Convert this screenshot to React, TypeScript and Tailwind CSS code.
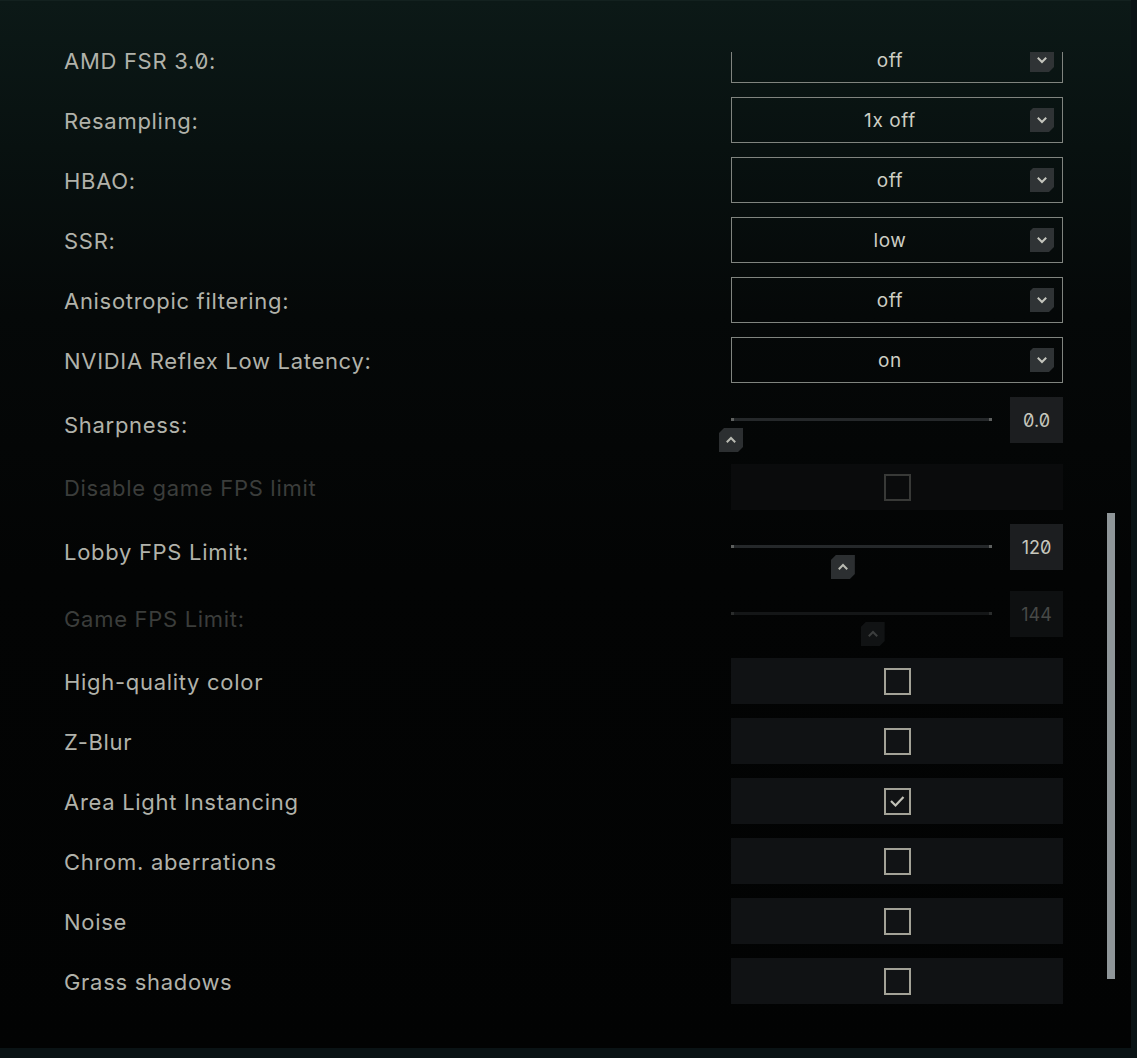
import React from "react";

type Row =
  | { kind: "select"; label: string; value: string }
  | { kind: "slider"; label: string; value: string; pct: number; disabled?: boolean }
  | { kind: "check"; label: string; checked: boolean; disabled?: boolean };

const rows: Row[] = [
  { kind: "select", label: "AMD FSR 3.0:", value: "off" },
  { kind: "select", label: "Resampling:", value: "1x off" },
  { kind: "select", label: "HBAO:", value: "off" },
  { kind: "select", label: "SSR:", value: "low" },
  { kind: "select", label: "Anisotropic filtering:", value: "off" },
  { kind: "select", label: "NVIDIA Reflex Low Latency:", value: "on" },
  { kind: "slider", label: "Sharpness:", value: "0.0", pct: 0 },
  { kind: "check", label: "Disable game FPS limit", checked: false, disabled: true },
  { kind: "slider", label: "Lobby FPS Limit:", value: "120", pct: (120 - 30) / 210 },
  { kind: "slider", label: "Game FPS Limit:", value: "144", pct: (144 - 30) / 210, disabled: true },
  { kind: "check", label: "High-quality color", checked: false },
  { kind: "check", label: "Z-Blur", checked: false },
  { kind: "check", label: "Area Light Instancing", checked: true },
  { kind: "check", label: "Chrom. aberrations", checked: false },
  { kind: "check", label: "Noise", checked: false },
  { kind: "check", label: "Grass shadows", checked: false },
];

const TRACK_W = 261;

function ChevronDown() {
  return (
    <svg width="12" height="12" viewBox="0 0 12 12" fill="none">
      <path d="M2.5 4.5 L6 8 L9.5 4.5" stroke="#c4c5bd" strokeWidth="2" strokeLinecap="square" />
    </svg>
  );
}

function ChevronUp({ dim }: { dim?: boolean }) {
  return (
    <svg width="12" height="12" viewBox="0 0 12 12" fill="none">
      <path
        d="M2.5 7.5 L6 4 L9.5 7.5"
        stroke={dim ? "#3c3e3e" : "#b9bab2"}
        strokeWidth="2"
        strokeLinecap="square"
      />
    </svg>
  );
}

function Select({ value }: { value: string }) {
  return (
    <div className="relative h-[46px] w-[332px] border border-[#80847f] flex items-center pr-[14px]">
      <span className="flex-1 pt-[3px] text-center text-[19px] text-[#cdcec4] tracking-[0.6px]">{value}</span>
      <div className="absolute right-[8px] top-[10px] w-[24px] h-[24px] bg-[#2f3335] flex items-center justify-center [clip-path:polygon(3px_0,100%_0,100%_calc(100%-5px),calc(100%-5px)_100%,0_100%,0_3px)]">
        <ChevronDown />
      </div>
    </div>
  );
}

function Slider({ value, pct, disabled }: { value: string; pct: number; disabled?: boolean }) {
  return (
    <div className="h-[53px] w-[332px] flex items-start gap-[18px]">
      <div className="relative w-[261px] h-[53px]">
        <div
          className={`absolute left-0 right-0 top-[21px] h-[3px] ${disabled ? "bg-[#141617]" : "bg-[#25282a]"}`}
        />
        <div className={`absolute left-0 top-[21px] w-[3px] h-[3px] ${disabled ? "bg-[#2a2c2c]" : "bg-[#5e605f]"}`} />
        <div className={`absolute right-0 top-[21px] w-[3px] h-[3px] ${disabled ? "bg-[#2a2c2c]" : "bg-[#5e605f]"}`} />
        <div
          className={`absolute top-[31px] w-[24px] h-[24px] flex items-center justify-center [clip-path:polygon(5px_0,100%_0,100%_calc(100%-5px),calc(100%-5px)_100%,0_100%,0_5px)] ${
            disabled ? "bg-[#111314]" : "bg-[#2c2f31]"
          }`}
          style={{ left: pct * TRACK_W - 12 }}
        >
          <ChevronUp dim={disabled} />
        </div>
      </div>
      <div
        className={`w-[53px] h-[46px] flex items-center justify-center text-[18px] slashed-zero ${
          disabled ? "bg-[#0e1011] text-[#474947]" : "bg-[#1c1e20] text-[#c6c7bd]"
        }`}
      >
        {value}
      </div>
    </div>
  );
}

function Check({ checked, disabled }: { checked: boolean; disabled?: boolean }) {
  return (
    <div
      className={`h-[46px] w-[332px] flex items-center justify-center ${
        disabled ? "bg-[#0a0b0c]" : "bg-[#101214]"
      }`}
    >
      <div
        className={`w-[27px] h-[27px] border-2 flex items-center justify-center ${
          disabled ? "border-[#383937] bg-[#0a0b0c]" : "border-[#a3a297] bg-[#111315]"
        }`}
      >
        {checked && (
          <svg width="23" height="23" viewBox="0 0 23 23" fill="none">
            <path d="M5 11 L9.5 15.5 L17.5 7" stroke="#c2c2b8" strokeWidth="2.2" />
          </svg>
        )}
      </div>
    </div>
  );
}

export default function App() {
  return (
    <div className="w-[1137px] h-[1058px] bg-[#0a1315] font-['Inter',sans-serif] slashed-zero overflow-hidden">
      <div className="w-[1131px] h-[1048px] border-t border-[#13211f] bg-[linear-gradient(180deg,#0c1917_0%,#081110_14%,#050808_30%,#030404_55%,#020303_100%)] flex">
        <div className="flex-1 mt-[51px] h-[975px] overflow-hidden">
          <div className="-mt-[15px] flex flex-col gap-[14px] pl-[64px]">
            {rows.map((r) => (
              <div key={r.label} className="flex items-center">
                <div
                  className={`w-[667px] pt-[2px] leading-[24px] text-[22px] tracking-[0.7px] ${
                    "disabled" in r && r.disabled ? "text-[#3b3d3b]" : "text-[#b1b2aa]"
                  }`}
                >
                  {r.label}
                </div>
                {r.kind === "select" && <Select value={r.value} />}
                {r.kind === "slider" && <Slider value={r.value} pct={r.pct} disabled={r.disabled} />}
                {r.kind === "check" && <Check checked={r.checked} disabled={r.disabled} />}
              </div>
            ))}
          </div>
        </div>
        <div className="w-[24px] mr-[8px] mt-[51px] h-[975px] flex justify-center">
          <div className="w-[8px] mt-[461px] h-[466px] bg-[#8f9699]" />
        </div>
      </div>
    </div>
  );
}
